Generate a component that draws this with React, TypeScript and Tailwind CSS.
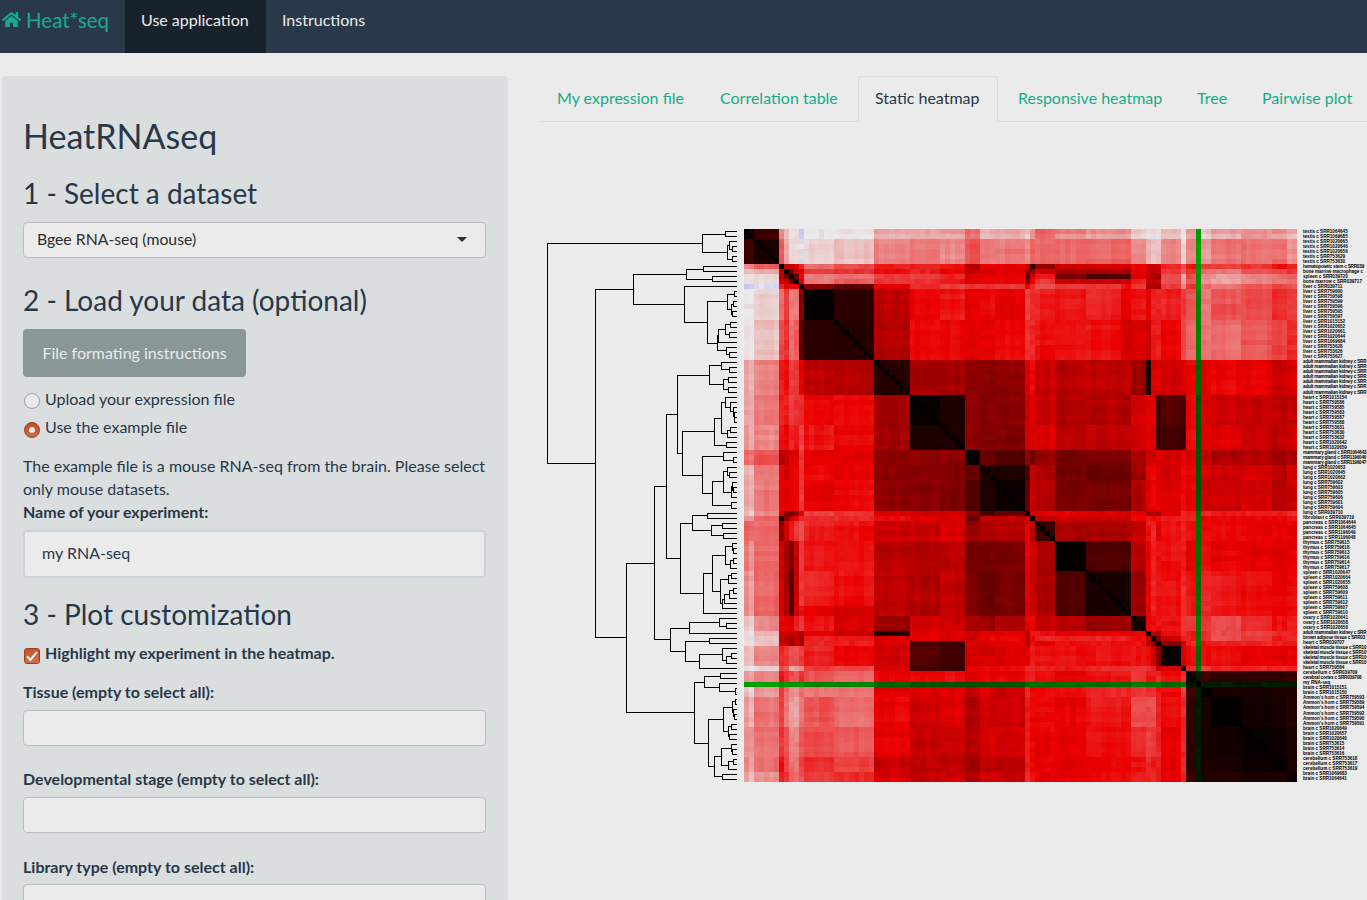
import React from "react";
import { FaHome } from "react-icons/fa";

const SIZE = 553;
const N = 110;
const edgeX = (i: number) => Math.max(0, Math.round((i * SIZE) / N - 0.3));
const edgeY = (i: number) => Math.round((i * SIZE) / N + 0.05);

// First sample index of each cluster block.
const STARTS = [
  0, 2, 7, 8, 9, 10, 11, 12, 18, 26, 33, 39, 44, 47, 50, 56, 57, 58, 62, 68, 77, 80, 81, 82, 83, 87, 88, 91, 93, 99,
  105, 108,
];

// Upper triangle of block levels: 0 black, 50 red, 100 white, above 100 blue.
const LEVELS: number[][] = [
  [5, 13, 80, 88, 97, 97, 106, 98, 98, 86, 83, 83, 71, 84, 85, 88, 80, 70, 77, 80, 90, 94, 97, 97, 88, 98, 80, 93, 83, 80, 80, 84],
  [6, 70, 86, 95, 95, 103, 94, 91, 78, 76, 79, 67, 76, 75, 80, 72, 73, 74, 72, 80, 88, 92, 90, 79, 96, 78, 82, 75, 74, 73, 80],
  [0, 44, 42, 46, 58, 72, 66, 58, 58, 53, 36, 50, 50, 47, 8, 32, 45, 44, 50, 46, 44, 47, 57, 64, 52, 62, 63, 60, 54, 54],
  [0, 22, 40, 47, 62, 62, 54, 55, 50, 40, 45, 46, 26, 32, 45, 34, 34, 48, 42, 40, 45, 60, 66, 60, 72, 75, 70, 62, 60],
  [0, 24, 50, 76, 72, 62, 62, 55, 46, 50, 52, 20, 42, 56, 25, 17, 48, 42, 38, 32, 66, 85, 66, 80, 84, 80, 74, 74],
  [0, 47, 75, 70, 60, 60, 56, 46, 52, 53, 32, 50, 60, 45, 44, 57, 44, 42, 45, 68, 82, 68, 80, 84, 80, 74, 72],
  [0, 28, 20, 50, 60, 62, 62, 60, 61, 50, 62, 66, 64, 62, 60, 36, 33, 34, 62, 75, 62, 75, 74, 70, 66, 66],
  [1, 9, 40, 50, 54, 49, 52, 50, 62, 60, 57, 54, 56, 53, 49, 56, 56, 57, 62, 66, 74, 68, 66, 60, 62],
  [8, 38, 50, 50, 48, 50, 51, 60, 58, 53, 52, 53, 48, 44, 54, 54, 51, 64, 72, 74, 73, 68, 64, 60],
  [8, 35, 34, 31, 30, 30, 45, 50, 42, 39, 40, 33, 7, 48, 46, 43, 46, 52, 48, 50, 48, 44, 46],
  [2, 6, 31, 29, 28, 44, 47, 43, 37, 38, 45, 49, 50, 14, 18, 14, 50, 46, 43, 42, 39, 42],
  [6, 30, 27, 28, 43, 47, 45, 39, 40, 45, 49, 48, 13, 14, 13, 52, 48, 48, 45, 40, 44],
  [2, 22, 17, 30, 24, 33, 24, 26, 36, 43, 44, 46, 44, 50, 46, 42, 37, 38, 34, 36],
  [7, 6, 14, 40, 36, 25, 22, 34, 48, 50, 48, 44, 52, 50, 47, 45, 45, 40, 44],
  [3, 20, 43, 38, 26, 25, 37, 48, 50, 48, 46, 52, 48, 44, 43, 44, 39, 43],
  [0, 45, 47, 48, 44, 50, 34, 40, 32, 50, 60, 54, 58, 56, 57, 57, 60],
  [0, 42, 45, 43, 51, 54, 50, 54, 54, 60, 56, 52, 52, 52, 50, 52],
  [12, 36, 35, 44, 55, 58, 50, 54, 58, 52, 50, 50, 50, 49, 50],
  [1, 17, 40, 50, 58, 52, 53, 56, 50, 53, 50, 48, 48, 50],
  [5, 34, 50, 56, 54, 53, 60, 54, 57, 54, 53, 50, 53],
  [7, 50, 54, 54, 53, 60, 62, 60, 66, 58, 52, 56],
  [0, 40, 38, 50, 58, 55, 60, 68, 62, 58, 58],
  [0, 30, 46, 55, 58, 62, 66, 60, 56, 58],
  [0, 28, 44, 56, 56, 58, 56, 54, 55],
  [2, 45, 52, 50, 52, 50, 49, 50],
  [0, 58, 62, 58, 58, 56, 58],
  [4, 14, 10, 10, 9, 12],
  [0, 5, 5, 6, 7],
  [1, 4, 5, 8],
  [2, 3, 6],
  [1, 6],
  [2],
];

const HIGHLIGHT = 90;

const blockOf = (i: number) => {
  const p = i === HIGHLIGHT ? 89 : i;
  let b = 0;
  while (b + 1 < STARTS.length && STARTS[b + 1] <= p) b++;
  return b;
};

const noise = (a: number, b: number) => {
  const s = Math.sin(a * 12.9898 + b * 78.233) * 43758.5453;
  return s - Math.floor(s) - 0.5;
};

const level = (i: number, j: number) => {
  if (i === j) return 0;
  const a = Math.min(i, j);
  const b = Math.max(i, j);
  const ga = blockOf(a);
  const gb = blockOf(b);
  let v = LEVELS[ga][gb - ga];
  const k = Math.min(1, v / 34);
  v += k * (noise(a, gb + 200) * 4 + noise(b, ga + 400) * 4 + noise(a, b) * 1.2);
  if ((b === 75 || b === 76) && a >= 11 && a <= 25) v -= 8;
  if (a === 1 && gb > 8) v += 4;
  return Math.max(0, v);
};

const greenOf = (i: number) => {
  if (i < 7) return 158;
  if (i < 12) return 152;
  if (i < 26) return 134;
  if (i < 33) return 100;
  if (i < 56) return 84;
  if (i < 62) return 110;
  if (i < 77) return 108;
  if (i < 83) return 122;
  if (i < 87) return 102;
  if (i < 88) return 120;
  return 28;
};

const colour = (i: number, j: number) => {
  if (i === j) return "rgb(0,0,0)";
  if (i === HIGHLIGHT || j === HIGHLIGHT) {
    const o = i === HIGHLIGHT ? j : i;
    return `rgb(0,${Math.round(greenOf(o) + noise(o, 3) * 12)},0)`;
  }
  const v = level(i, j);
  if (v <= 50) return `rgb(${Math.round((v / 50) * 235)},0,0)`;
  if (v <= 100) {
    const g = Math.round(((v - 50) / 50) * 235);
    return `rgb(235,${g},${g})`;
  }
  const r = Math.round(235 - (v - 100) * 6);
  return `rgb(${r},${r},235)`;
};

function Heatmap() {
  const cells: React.ReactElement[] = [];
  for (let r = 0; r < N; r++) {
    let c = 0;
    while (c < N) {
      const fill = colour(r, c);
      let e = c + 1;
      while (e < N && colour(r, e) === fill) e++;
      cells.push(
        <rect
          key={`${r}-${c}`}
          x={edgeX(c)}
          y={edgeY(r)}
          width={edgeX(e) - edgeX(c)}
          height={edgeY(r + 1) - edgeY(r)}
          fill={fill}
        />
      );
      c = e;
    }
  }
  return (
    <svg width={SIZE} height={SIZE} shapeRendering="crispEdges" className="block shrink-0">
      {cells}
    </svg>
  );
}

// A tree is either a leaf (0) or [merge position, upper branch, lower branch].
type Tree = 0 | [number, Tree, Tree];

const TREE: Tree = [
  22,
  [487, [556, 0, 0], [562, [568, 0, [577, 0, 0]], [577, 0, 0]]],
  [
    166,
    [
      280,
      [439, [490, 0, 0], [517, 0, 0]],
      [
        433,
        0,
        [
          502,
          [562, [583, 0, 0], [574, [580, 0, 0], [577, 0, 0]]],
          [532, [535, [556, [571, 0, 0], [568, 0, 0]], 0], [559, 0, [568, 0, 0]]],
        ],
      ],
    ],
    [
      259,
      [
        343,
        [
          379,
          [
            412,
            [508, [544, 0, [568, 0, 0]], [550, [565, 0, 0], [565, 0, 0]]],
            [
              427,
              [
                523,
                [544, [556, 0, [571, 0, [580, 0, [583, 0, [584, 0, 0]]]]], [562, [571, 0, 0], 0]],
                [559, 0, 0],
              ],
              [
                487,
                [550, 0, [580, 0, 0]],
                [517, [550, [562, 0, [568, 0, 0]], [574, [577, 0, [580, 0, 0]], 0]], [574, 0, 0]],
              ],
            ],
          ],
          [
            421,
            [457, [502, 0, 0], [514, [547, 0, 0], [550, 0, 0]]],
            [
              490,
              [
                517,
                [556, [577, 0, [580, 0, 0]], [571, [580, 0, 0], 0]],
                [541, [565, [574, 0, 0], 0], [547, [553, [568, [580, 0, 0], 0], 0], 0]],
              ],
              0,
            ],
          ],
        ],
        [
          391,
          [448, [538, 0, [559, 0, 0]], 0],
          [436, [508, 0, 0], [478, [547, 0, [559, [574, 0, 0], 0]], 0]],
        ],
      ],
      [
        463,
        [493, [541, 0, 0], [538, 0, [586, 0, 0]]],
        [
          505,
          [550, [577, [586, 0, 0], [580, 0, [583, 0, 0]]], [565, [574, 0, 0], [568, 0, 0]]],
          [523, [544, [574, 0, [577, 0, 0]], [565, [580, 0, 0], 0]], [547, 0, 0]],
        ],
      ],
    ],
  ],
];

function dendrogramPath() {
  let leaf = 0;
  const parts: string[] = [];
  const snap = (y: number) => Math.floor(y) + 0.5;
  const walk = (t: Tree): [number, number] => {
    if (t === 0) {
      const y = (leaf + 0.5) * (SIZE / N);
      leaf++;
      return [197, y];
    }
    const x = Math.floor(t[0] / 3) + 0.5;
    const [ax, ay] = walk(t[1]);
    const [bx, by] = walk(t[2]);
    parts.push(`M${ax} ${snap(ay)}H${x}V${snap(by)}H${bx}`);
    return [x, (ay + by) / 2];
  };
  walk(TREE);
  return parts.join("");
}

const seq = (name: string, ids: string) => ids.split(" ").map((id) => `${name} c SRR${id}`);

const LABELS = [
  ...seq("testis", "1064645 1069685 1020665 1020646 1020656 753629 753630"),
  "hematopoietic stem c SRR039",
  "bone marrow macrophage c",
  "spleen c SRR039720",
  "bone marrow c SRR039717",
  ...seq(
    "liver",
    "039711 759600 759598 759599 759596 759595 759597 1015152 1020652 1020661 1020644 1069684 753628 753626 753627"
  ),
  ...Array(7).fill("adult mammalian kidney c SRR"),
  ...seq("heart", "1015154 759586 759585 759583 759587 759588 753631 753630 753632 1020642 1020659"),
  ...seq("mammary gland", "1064643 1196046 1196047"),
  ...seq("lung", "1020653 1020645 1020662 759602 759603 759605 759606 759601 759604 039710"),
  "fibroblast c SRR039719",
  ...seq("pancreas", "1064644 1064645 1196049 1196048"),
  ...seq("thymus", "759615 759618 759613 759616 759614 759617"),
  ...seq("spleen", "1020647 1020664 1020655 759608 759609 759611 759612 759607 759610"),
  ...seq("ovary", "1020641 1020658 1020650"),
  "adult mammalian kidney c SRR",
  "brown adipose tissue c SRR03",
  "heart c SRR039707",
  ...Array(4).fill("skeletal muscle tissue c SRR10"),
  "heart c SRR759584",
  "cerebellum c SRR039709",
  "cerebral cortex c SRR039708",
  "my RNA-seq",
  ...seq("brain", "1015151 1015150"),
  ...seq("Ammon's horn", "759593 759589 759594 759592 759590 759591"),
  ...seq("brain", "1020649 1020657 1020640 753615 753614 753616"),
  ...seq("cerebellum", "753618 753617 753619"),
  ...seq("brain", "1069683 1064641"),
];

const TABS = [
  { label: "My expression file", cls: "w-[163px] pl-[17px]" },
  { label: "Correlation table", cls: "w-[155px] pl-[17px]" },
  { label: "Static heatmap", cls: "w-[140px] pl-4", active: true },
  { label: "Responsive heatmap", cls: "w-[182px] pl-5" },
  { label: "Tree", cls: "w-[65px] pl-[17px]" },
  { label: "Pairwise plot", cls: "w-[126px] pl-[17px]" },
];

function Tab({ label, cls, active }: { label: string; cls: string; active?: boolean }) {
  return (
    <li
      className={`${cls} h-[46px] shrink-0 whitespace-nowrap leading-[22px] ${
        active
          ? "rounded-t border border-b-0 border-[#d8dcde] bg-[#ebebeb] pt-[10px] text-[#283849]"
          : "border-b border-[#d8dcde] pt-[11px] text-[#17ab8c]"
      }`}
    >
      {label}
    </li>
  );
}

function EmptySelect({ label, cls }: { label: string; cls: string }) {
  return (
    <div className={cls}>
      <label className="block h-[23px] font-bold">{label}</label>
      <div className="mt-[6px] h-9 rounded border border-[#babebe] bg-[#ebebeb]" />
    </div>
  );
}

export default function App() {
  return (
    <div className="h-[900px] w-full overflow-hidden bg-[#ebebeb] font-['Lato',sans-serif] text-[16px] leading-[22px] text-[#283849]">
      <nav className="flex h-[53px] bg-[#293949] text-[#ebebeb]">
        <div className="flex w-[125px] items-start gap-[5px] pl-[2px] pt-[9px] text-[20.5px] leading-[23px] text-[#17ab8c]">
          <FaHome className="mt-[1px] h-[19px] w-[19px]" />
          <span>Heat*seq</span>
        </div>
        <div className="w-[141px] bg-[#18222b] pl-4 pt-[9px]">Use application</div>
        <div className="pl-4 pt-[9px]">Instructions</div>
      </nav>
      <div className="flex pl-[2px] pt-[23px]">
        <aside className="h-[840px] w-[506px] shrink-0 rounded bg-[#dadedf] pl-[21px] pr-[22px] pt-[39px]">
          <h1 className="h-[42px] text-[34px] leading-[42px]">HeatRNAseq</h1>
          <h2 className="mt-[18px] h-[36px] text-[28px] leading-[36px]">1 - Select a dataset</h2>
          <div className="mt-[11px] flex h-9 items-center justify-between rounded border border-[#babebe] bg-[#ebebeb] pb-[1px] pl-[13px] pr-[18px] text-[15.8px] text-[#2d2d2d]">
            <span className="pb-[1px]">Bgee RNA-seq (mouse)</span>
            <span className="border-x-[5px] border-t-[5px] border-x-transparent border-t-[#2d2d2d]" />
          </div>
          <h2 className="mt-[24px] h-[36px] text-[28px] leading-[36px]">2 - Load your data (optional)</h2>
          <button className="mt-[11px] block h-12 w-[223px] rounded bg-[#899797] pb-[1px] text-[#ebebeb]">
            File formating instructions
          </button>
          <div className="mt-[11px] flex h-[23px] gap-[5px]">
            <span className="ml-[1px] mt-[5px] h-4 w-4 rounded-full border border-[#9b9e9e] bg-[#ebebeb]" />
            Upload your expression file
          </div>
          <div className="mt-[5px] flex h-[23px] gap-[5px]">
            <span className="ml-[1px] mt-[6px] flex h-4 w-4 items-center justify-center rounded-full border border-[#9c3f1c] bg-linear-to-b from-[#b94a20] to-[#d2704b]">
              <span className="h-[6px] w-[6px] rounded-full bg-[#ebebeb]" />
            </span>
            Use the example file
          </div>
          <p className="mt-4 whitespace-nowrap">
            <span className="block h-[23px]">The example file is a mouse RNA-seq from the brain. Please select</span>
            <span className="block h-[23px]">only mouse datasets.</span>
          </p>
          <label className="block h-[23px] font-bold">Name of your experiment:</label>
          <div className="mt-[6px] flex h-[48px] items-center rounded border-2 border-[#cad2db] bg-[#ebebeb] pb-[2px] pl-[17px]">
            my RNA-seq
          </div>
          <h2 className="mt-[18px] h-[36px] text-[28px] leading-[36px]">3 - Plot customization</h2>
          <div className="mt-[10px] flex h-[23px] gap-[5px] font-bold">
            <span className="ml-[1px] mt-[6px] flex h-4 w-4 items-center justify-center rounded-[3px] border border-[#9c3f1c] bg-linear-to-b from-[#c35128] to-[#d2704b]">
              <svg width="12" height="12" viewBox="0 0 12 12" fill="none" stroke="#ebebeb" strokeWidth="2.2">
                <path d="M1 6.2 4.4 9.8 11 2" />
              </svg>
            </span>
            Highlight my experiment in the heatmap.
          </div>
          <EmptySelect label="Tissue (empty to select all):" cls="mt-4" />
          <EmptySelect label="Developmental stage (empty to select all):" cls="mt-[22px]" />
          <EmptySelect label="Library type (empty to select all):" cls="mt-[22px] leading-[24px]" />
        </aside>
        <main className="ml-8 w-[827px] overflow-hidden">
          <ul className="flex">
            {TABS.map((t) => (
              <Tab key={t.label} {...t} />
            ))}
          </ul>
          <div className="mt-[107px] flex">
            <svg width="204" height={SIZE} className="block shrink-0" shapeRendering="crispEdges">
              <path d={dendrogramPath()} fill="none" stroke="#000" strokeWidth="1" />
            </svg>
            <Heatmap />
            <div className="ml-[6px] flex w-[64px] shrink-0 flex-col font-['Liberation_Sans',sans-serif] text-[4.6px] font-bold text-black">
              {LABELS.map((l, i) => (
                <div
                  key={i}
                  className={`h-[5.027px] whitespace-nowrap leading-[5.027px] ${
                    l.length > 25 ? "tracking-[-0.17px]" : l.length > 23 ? "tracking-[-0.05px]" : ""
                  }`}
                >
                  {l}
                </div>
              ))}
            </div>
          </div>
        </main>
      </div>
    </div>
  );
}
